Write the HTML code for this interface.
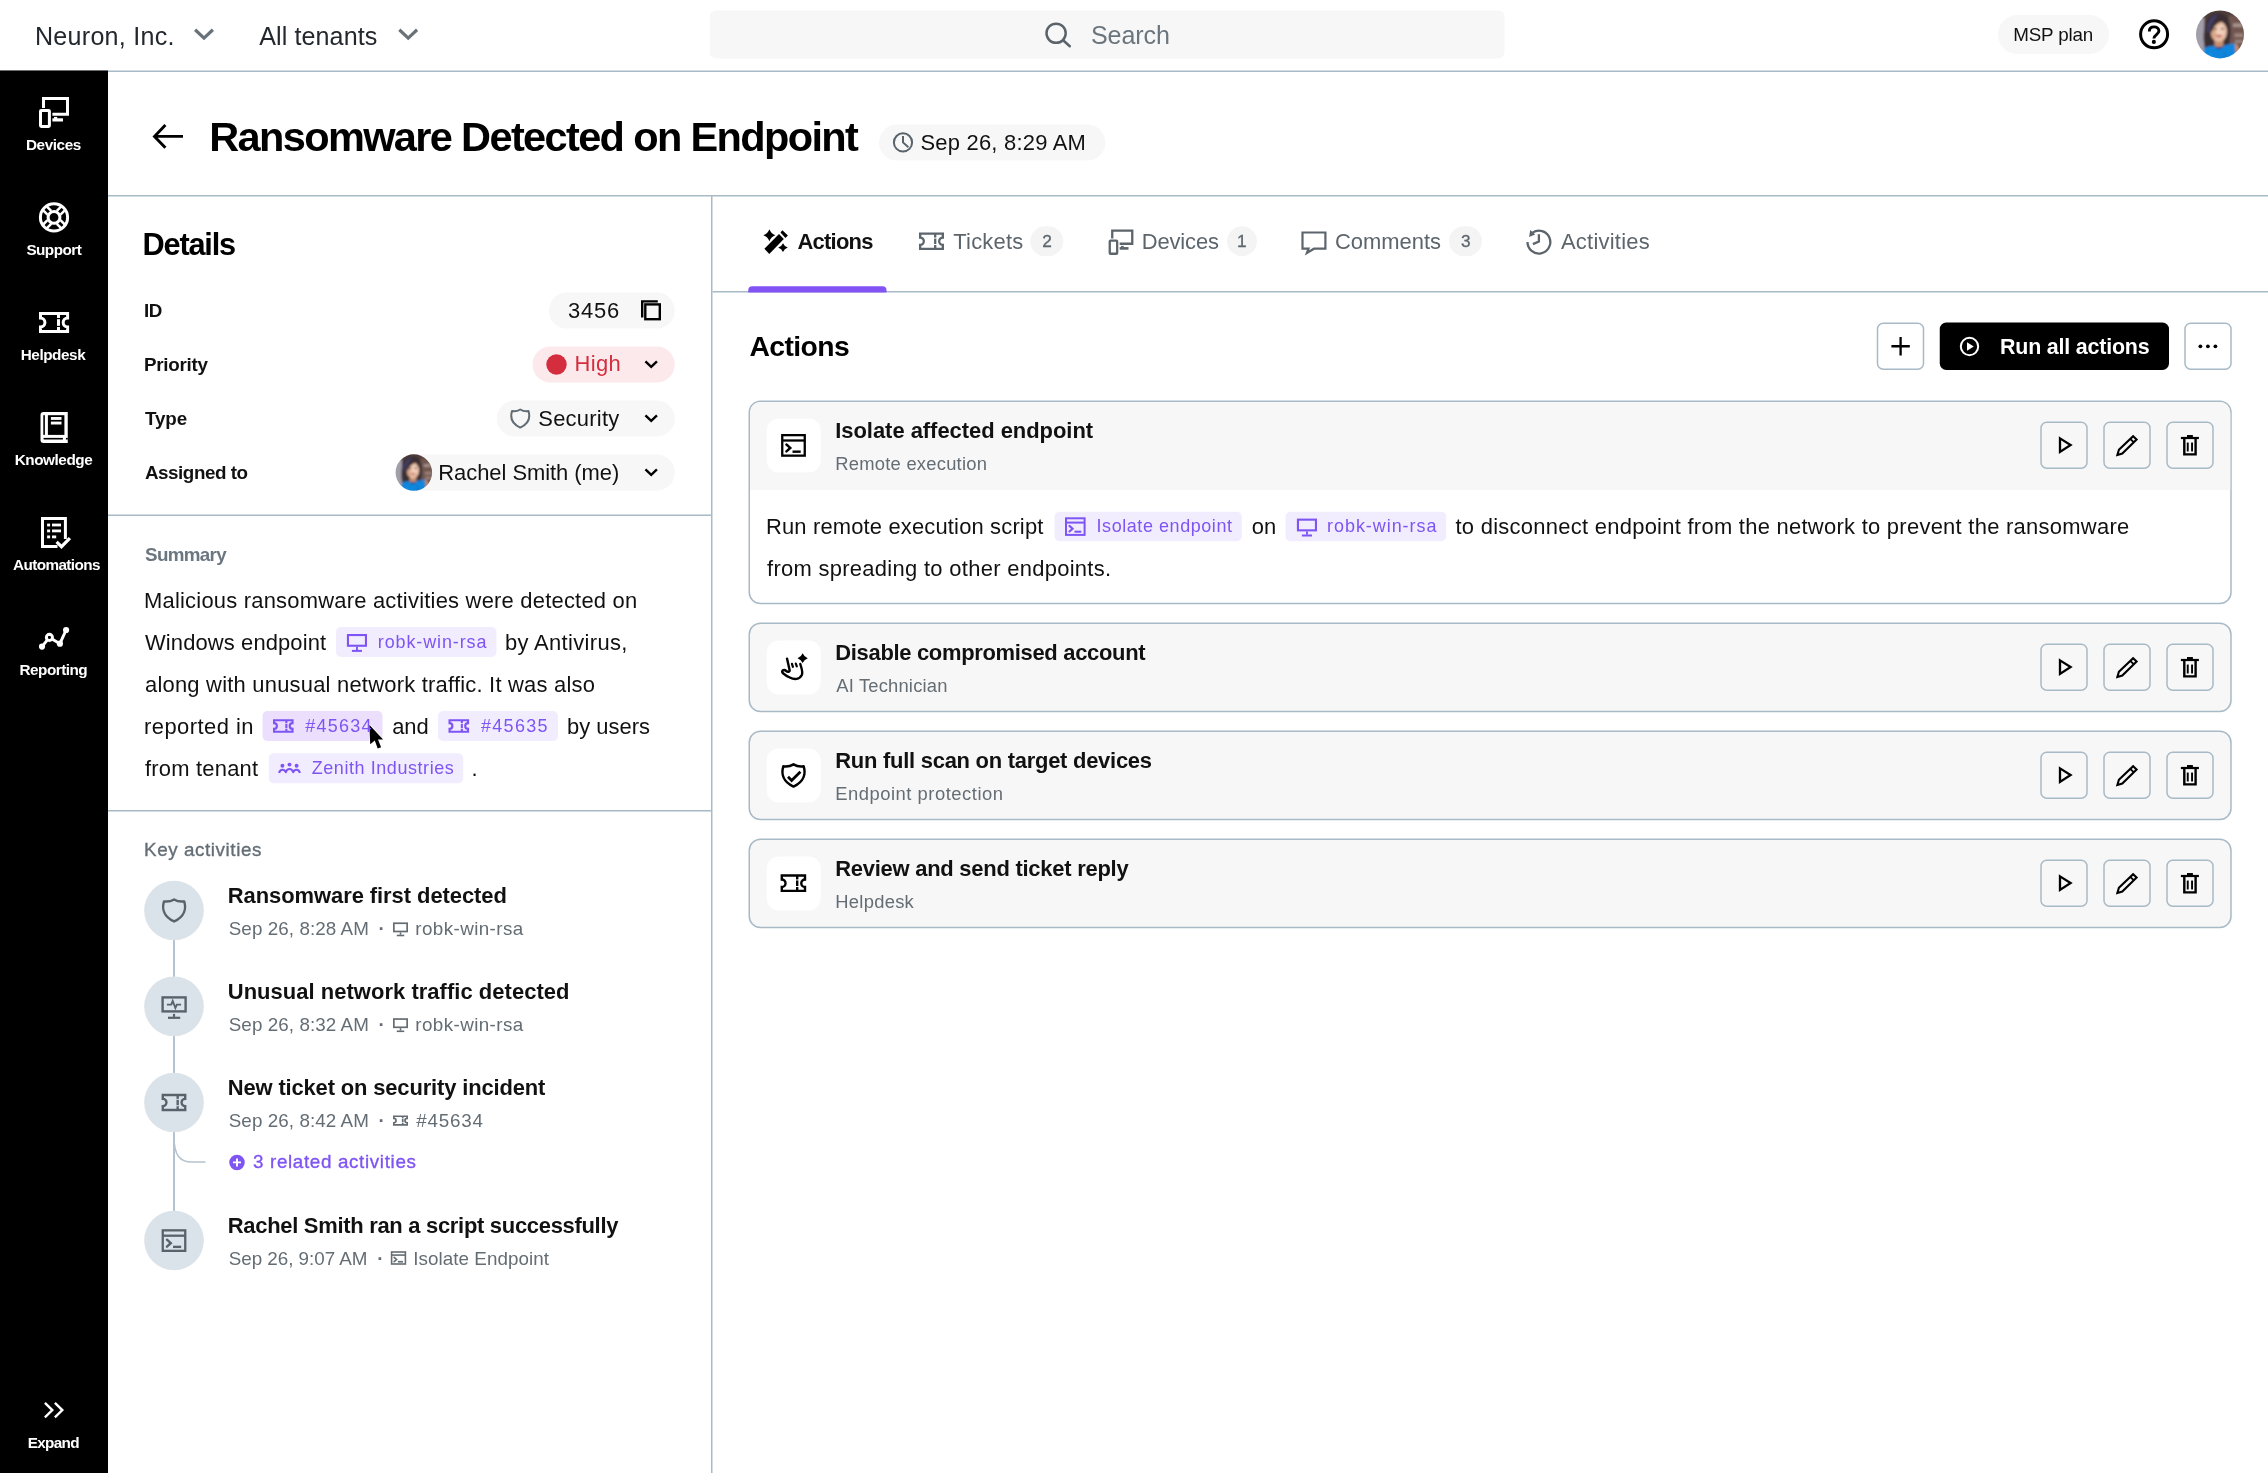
<!DOCTYPE html>
<html lang="en">
<head>
<meta charset="utf-8">
<title>Ransomware Detected on Endpoint</title>
<style>
html,body{margin:0;padding:0;background:#fff;}
body{width:2268px;height:1473px;position:relative;overflow:hidden;font-family:"Liberation Sans",sans-serif;color:#111;}
#gfx{position:absolute;left:0;top:0;width:2268px;height:1473px;display:block;}
.t{position:absolute;white-space:pre;line-height:1;font-weight:400;}
header,nav,section,aside,main{position:absolute;left:0;top:0;width:0;height:0;will-change:transform;}
</style>
</head>
<body>
<svg id="gfx" width="2268" height="1473" viewBox="0 0 2268 1473">
<g class="topbar-gfx">
<rect x="0" y="70.5" width="2268" height="1.5" fill="#a9bac7"/>
<path d="M195.13,29.73 L204,38.14 L212.87,29.73" fill="none" stroke="#6a7279" stroke-width="3.2" stroke-linecap="butt" stroke-linejoin="miter"/>
<path d="M399.33,29.73 L408.2,38.14 L417.07,29.73" fill="none" stroke="#6a7279" stroke-width="3.2" stroke-linecap="butt" stroke-linejoin="miter"/>
<rect x="709.75" y="10.5" width="794.75" height="48" rx="6" fill="#f7f7f7"/>
<circle cx="1056.1" cy="33.25" r="9.6" fill="none" stroke="#5a636b" stroke-width="2.5"/>
<line x1="1063.1" y1="40.3" x2="1069.8" y2="46.2" stroke="#5a636b" stroke-width="2.5" stroke-linecap="round"/>
<rect x="1998" y="15" width="111" height="39" rx="19.5" fill="#f7f7f7"/>
<circle cx="2154.1" cy="34.35" r="13.5" fill="none" stroke="#000" stroke-width="3"/>
<path d="M2149.3,31.4 C2149.3,28.4 2151.4,26.9 2154.1,26.9 C2156.9,26.9 2158.9,28.6 2158.9,31 C2158.9,34.6 2153.9,34.6 2153.9,38.6" fill="none" stroke="#000" stroke-width="2.9" stroke-linecap="butt" stroke-linejoin="round"/>
<circle cx="2153.85" cy="41.9" r="2.05" fill="#000"/>
<g transform="translate(2196,10.4) scale(1)" clip-path="url(#av1)"><clipPath id="av1"><circle cx="24" cy="24" r="24"/></clipPath><filter id="av1b" x="-10%" y="-10%" width="120%" height="120%"><feGaussianBlur stdDeviation="0.8"/></filter><g filter="url(#av1b)"><rect x="-4" y="-4" width="56" height="56" fill="#4f3d3a"/><rect x="-4" y="7" width="12.3" height="48" fill="#a29eaa"/><rect x="33" y="5" width="20" height="32" fill="#70564f"/><rect x="37" y="13" width="9" height="3.6" fill="#a8948e"/><rect x="38.5" y="23" width="9" height="3.6" fill="#9d857f"/><rect x="39" y="29.5" width="8" height="3" fill="#9d857f"/><path d="M8.2,34 C6.3,18 10,3 21,2.4 C30,2.2 35.2,10 34.3,22 C34,28 33.6,32 32.3,35.5 L10,36.5 Z" fill="#3b2e31"/><path d="M10.6,21 C10.2,10 16,4 22.6,4 C18.6,8.5 15,14 13.2,22.5 Z" fill="#3f3c64"/><rect x="18.4" y="28" width="9" height="9.5" fill="#c4906e"/><ellipse cx="22.9" cy="21.3" rx="8.1" ry="10.4" fill="#e5bba1"/><ellipse cx="24.6" cy="20.5" rx="4.2" ry="6.5" fill="#f4d6c2" opacity="0.75"/><ellipse cx="17.2" cy="23" rx="2.2" ry="6" fill="#c99778" opacity="0.6"/><path d="M14.3,20.5 C14.4,12 20,8.4 30.2,10.4 C24,11.3 18.6,13.3 15.9,21.5 Z" fill="#3b2e31"/><path d="M30.3,12.5 C32.6,18 32.2,27 30,33 L33,34.5 C35,27 35,17 32.2,10.5 Z" fill="#3b2e31"/><ellipse cx="19.2" cy="18.3" rx="1.7" ry="0.8" fill="#4a352f"/><ellipse cx="26.5" cy="18.3" rx="1.7" ry="0.8" fill="#4a352f"/><ellipse cx="23" cy="25.6" rx="3.3" ry="1.15" fill="#c96a6a"/><path d="M5,52 L8.4,37.6 C12,35.6 15,35.6 17.5,35 C21,39.6 25.5,39.6 28.5,34.6 C32,34.6 36,33.6 38.7,32.7 L40.5,52 Z" fill="#0d86dc"/><path d="M12,52 L14,40 L17,52 Z" fill="#2a9bea" opacity="0.7"/><path d="M26,52 L29,40 L31,52 Z" fill="#0a6fc0" opacity="0.6"/><path d="M17.5,35 C21,39.6 25.5,39.6 28.5,34.6 C25.5,37.2 21,37.4 17.5,35 Z" fill="#1b2b7c"/><path d="M38.7,32.7 C42,33.5 44.6,38 44.6,52 L40.5,52 Z" fill="#c4906e"/></g></g>
</g>
<g class="sidebar-gfx">
<rect x="0" y="70.5" width="108" height="1402.5" fill="#000"/>
<path d="M43.5,108 V98.4 H67.5 V114.3 H52.4" fill="none" stroke="#fff" stroke-width="3" stroke-linecap="butt" stroke-linejoin="miter"/><rect x="52.4" y="118.3" width="10.6" height="3.2" fill="#fff"/><rect x="54" y="116.9" width="3.2" height="2" fill="#fff"/><rect x="40.5" y="110.5" width="8.9" height="15.9" rx="0.8" fill="none" stroke="#fff" stroke-width="3"/>
<circle cx="54" cy="217.4" r="13.6" fill="none" stroke="#fff" stroke-width="3"/>
<circle cx="54" cy="217.4" r="5.9" fill="none" stroke="#fff" stroke-width="3"/>
<line x1="60.51" y1="220.23" x2="65.03" y2="224.75" stroke="#fff" stroke-width="2.5" stroke-linecap="butt"/>
<line x1="56.83" y1="223.91" x2="61.35" y2="228.43" stroke="#fff" stroke-width="2.5" stroke-linecap="butt"/>
<line x1="51.17" y1="223.91" x2="46.65" y2="228.43" stroke="#fff" stroke-width="2.5" stroke-linecap="butt"/>
<line x1="47.49" y1="220.23" x2="42.97" y2="224.75" stroke="#fff" stroke-width="2.5" stroke-linecap="butt"/>
<line x1="47.49" y1="214.57" x2="42.97" y2="210.05" stroke="#fff" stroke-width="2.5" stroke-linecap="butt"/>
<line x1="51.17" y1="210.89" x2="46.65" y2="206.37" stroke="#fff" stroke-width="2.5" stroke-linecap="butt"/>
<line x1="56.83" y1="210.89" x2="61.35" y2="206.37" stroke="#fff" stroke-width="2.5" stroke-linecap="butt"/>
<line x1="60.51" y1="214.57" x2="65.03" y2="210.05" stroke="#fff" stroke-width="2.5" stroke-linecap="butt"/>
<path d="M40.5,313.4 H67.6 V318.02 A4.43,4.43 0 0 0 67.6,326.88 V331.5 H40.5 V326.88 A4.43,4.43 0 0 0 40.5,318.02 Z" fill="none" stroke="#fff" stroke-width="3" stroke-linecap="butt" stroke-linejoin="miter"/><line x1="58.5" y1="313.59" x2="58.5" y2="318.02" stroke="#fff" stroke-width="3" stroke-linecap="butt"/><line x1="58.5" y1="319.18" x2="58.5" y2="325.83" stroke="#fff" stroke-width="3" stroke-linecap="butt"/><line x1="58.5" y1="326.99" x2="58.5" y2="331.31" stroke="#fff" stroke-width="3" stroke-linecap="butt"/>
<path d="M43.5,411.9 H67.75 V442.9 H43.5 A3,3 0 0 1 40.5,439.9 V414.9 A3,3 0 0 1 43.5,411.9 Z" fill="#fff"/>
<rect x="47.9" y="415.2" width="16.5" height="19.7" fill="#000"/>
<rect x="43.3" y="415.2" width="1.6" height="19.7" fill="#000"/>
<rect x="43.6" y="437.9" width="19.3" height="1.6" fill="#000"/>
<rect x="65.9" y="437.9" width="1.9" height="1.6" fill="#000"/>
<rect x="50.9" y="417" width="10.6" height="2.9" fill="#fff"/>
<rect x="50.9" y="421.6" width="10.6" height="2.9" fill="#fff"/>
<path d="M65.4,539 V518.5 H42.5 V546.4 H57.5" fill="none" stroke="#fff" stroke-width="3" stroke-linecap="butt" stroke-linejoin="miter"/>
<rect x="47.1" y="523.6" width="3" height="2.8" fill="#fff"/>
<rect x="52" y="523.6" width="9" height="2.8" fill="#fff"/>
<rect x="47.1" y="529.5" width="3" height="2.8" fill="#fff"/>
<rect x="52" y="529.5" width="9" height="2.8" fill="#fff"/>
<rect x="47.1" y="535.5" width="3" height="2.8" fill="#fff"/>
<rect x="52" y="535.5" width="4.2" height="2.8" fill="#fff"/>
<path d="M56.6,541.8 L61.5,546.7 L69.9,538.2" fill="none" stroke="#fff" stroke-width="3.2" stroke-linecap="butt" stroke-linejoin="miter"/>
<path d="M42,646.6 L49.4,637.4 L59.9,643.7 L66.1,630" fill="none" stroke="#fff" stroke-width="3" stroke-linecap="butt" stroke-linejoin="miter"/>
<circle cx="42" cy="646.6" r="3.1" fill="#fff"/>
<circle cx="59.9" cy="643.7" r="3.1" fill="#fff"/>
<circle cx="66.1" cy="630" r="3.1" fill="#fff"/>
<circle cx="49.4" cy="637.4" r="3" fill="#000" stroke="#fff" stroke-width="3.1"/>
<circle cx="49.4" cy="637.4" r="1.3" fill="#000"/>
<path d="M44.9,1402.9 L52.3,1410.1 L44.9,1417.3" fill="none" stroke="#fff" stroke-width="2.4" stroke-linecap="butt" stroke-linejoin="miter"/>
<path d="M54.9,1402.9 L62.3,1410.1 L54.9,1417.3" fill="none" stroke="#fff" stroke-width="2.4" stroke-linecap="butt" stroke-linejoin="miter"/>
</g>
<g class="titlebar-gfx">
<rect x="108" y="195" width="2160" height="1.5" fill="#a9bac7"/>
<path d="M183,136.4 H155.2 M165.4,125.1 L154.5,136.4 L165.4,147.7" fill="none" stroke="#000" stroke-width="2.9" stroke-linecap="butt" stroke-linejoin="miter"/>
<rect x="879" y="124.5" width="226.25" height="36" rx="18" fill="#f7f7f7"/>
<circle cx="903" cy="142.4" r="9.1" fill="none" stroke="#5a636b" stroke-width="2"/>
<path d="M903,136 V142.4 L908.4,147.2" fill="none" stroke="#5a636b" stroke-width="2" stroke-linecap="butt" stroke-linejoin="miter"/>
</g>
<g class="details-gfx">
<rect x="711" y="196" width="1.5" height="1277" fill="#a9bac7"/>
<rect x="108" y="514.5" width="603" height="1.5" fill="#a9bac7"/>
<rect x="108" y="810" width="603" height="1.5" fill="#a9bac7"/>
<rect x="549" y="292.5" width="125.75" height="36" rx="18" fill="#f7f7f7"/>
<rect x="645.3" y="304.4" width="14.5" height="14.8" fill="none" stroke="#000" stroke-width="2.4"/>
<path d="M642.2,317.5 V301.4 H657.8" fill="none" stroke="#000" stroke-width="2.4" stroke-linecap="butt" stroke-linejoin="miter"/>
<rect x="532.5" y="346.5" width="142.25" height="36" rx="18" fill="#fbe9ec"/>
<circle cx="556.5" cy="364.5" r="10.2" fill="#d42e3e"/>
<path d="M645.45,361.45 L651.2,366.9 L656.95,361.45" fill="none" stroke="#000" stroke-width="2.4" stroke-linecap="butt" stroke-linejoin="miter"/>
<rect x="496.75" y="400.5" width="178" height="36" rx="18" fill="#f7f7f7"/>
<path d="M520.25,409.5 C517.84,411 514.62,411.5 512.01,411.1 C510.2,416.9 511.61,423.5 520.25,427.54 C528.89,423.5 530.3,416.9 528.49,411.1 C525.88,411.5 522.66,411 520.25,409.5 Z" fill="none" stroke="#626c74" stroke-width="2" stroke-linecap="butt" stroke-linejoin="round"/>
<path d="M645.45,415.45 L651.2,420.9 L656.95,415.45" fill="none" stroke="#000" stroke-width="2.4" stroke-linecap="butt" stroke-linejoin="miter"/>
<rect x="396" y="454.5" width="278.75" height="36" rx="18" fill="#f7f7f7"/>
<g transform="translate(395.6,454.3) scale(0.76)" clip-path="url(#av2)"><clipPath id="av2"><circle cx="24" cy="24" r="24"/></clipPath><filter id="av2b" x="-10%" y="-10%" width="120%" height="120%"><feGaussianBlur stdDeviation="1.05"/></filter><g filter="url(#av2b)"><rect x="-4" y="-4" width="56" height="56" fill="#4f3d3a"/><rect x="-4" y="7" width="12.3" height="48" fill="#a29eaa"/><rect x="33" y="5" width="20" height="32" fill="#70564f"/><rect x="37" y="13" width="9" height="3.6" fill="#a8948e"/><rect x="38.5" y="23" width="9" height="3.6" fill="#9d857f"/><rect x="39" y="29.5" width="8" height="3" fill="#9d857f"/><path d="M8.2,34 C6.3,18 10,3 21,2.4 C30,2.2 35.2,10 34.3,22 C34,28 33.6,32 32.3,35.5 L10,36.5 Z" fill="#3b2e31"/><path d="M10.6,21 C10.2,10 16,4 22.6,4 C18.6,8.5 15,14 13.2,22.5 Z" fill="#3f3c64"/><rect x="18.4" y="28" width="9" height="9.5" fill="#c4906e"/><ellipse cx="22.9" cy="21.3" rx="8.1" ry="10.4" fill="#e5bba1"/><ellipse cx="24.6" cy="20.5" rx="4.2" ry="6.5" fill="#f4d6c2" opacity="0.75"/><ellipse cx="17.2" cy="23" rx="2.2" ry="6" fill="#c99778" opacity="0.6"/><path d="M14.3,20.5 C14.4,12 20,8.4 30.2,10.4 C24,11.3 18.6,13.3 15.9,21.5 Z" fill="#3b2e31"/><path d="M30.3,12.5 C32.6,18 32.2,27 30,33 L33,34.5 C35,27 35,17 32.2,10.5 Z" fill="#3b2e31"/><ellipse cx="19.2" cy="18.3" rx="1.7" ry="0.8" fill="#4a352f"/><ellipse cx="26.5" cy="18.3" rx="1.7" ry="0.8" fill="#4a352f"/><ellipse cx="23" cy="25.6" rx="3.3" ry="1.15" fill="#c96a6a"/><path d="M5,52 L8.4,37.6 C12,35.6 15,35.6 17.5,35 C21,39.6 25.5,39.6 28.5,34.6 C32,34.6 36,33.6 38.7,32.7 L40.5,52 Z" fill="#0d86dc"/><path d="M12,52 L14,40 L17,52 Z" fill="#2a9bea" opacity="0.7"/><path d="M26,52 L29,40 L31,52 Z" fill="#0a6fc0" opacity="0.6"/><path d="M17.5,35 C21,39.6 25.5,39.6 28.5,34.6 C25.5,37.2 21,37.4 17.5,35 Z" fill="#1b2b7c"/><path d="M38.7,32.7 C42,33.5 44.6,38 44.6,52 L40.5,52 Z" fill="#c4906e"/></g></g>
<path d="M645.45,469.45 L651.2,474.9 L656.95,469.45" fill="none" stroke="#000" stroke-width="2.4" stroke-linecap="butt" stroke-linejoin="miter"/>
<rect x="336" y="627" width="160.5" height="30" rx="5" fill="#f1edfe"/>
<rect x="347.95" y="635.05" width="18" height="10.7" fill="none" stroke="#7e54f3" stroke-width="2.1"/><rect x="356" y="646.8" width="1.89" height="3.21" fill="#7e54f3"/><rect x="351.92" y="649.9" width="10.05" height="1.99" fill="#7e54f3"/>
<rect x="262.5" y="711" width="120" height="30" rx="5" fill="#ebdffd"/>
<path d="M274.05,720.25 H292.55 V723.14 A2.86,2.86 0 0 0 292.55,728.86 V731.75 H274.05 V728.86 A2.86,2.86 0 0 0 274.05,723.14 Z" fill="none" stroke="#7e54f3" stroke-width="2.1" stroke-linecap="butt" stroke-linejoin="miter"/><line x1="286.35" y1="720.29" x2="286.35" y2="723.14" stroke="#7e54f3" stroke-width="2.1" stroke-linecap="butt"/><line x1="286.35" y1="723.89" x2="286.35" y2="728.18" stroke="#7e54f3" stroke-width="2.1" stroke-linecap="butt"/><line x1="286.35" y1="728.92" x2="286.35" y2="731.71" stroke="#7e54f3" stroke-width="2.1" stroke-linecap="butt"/>
<rect x="438" y="711" width="120" height="30" rx="5" fill="#f1edfe"/>
<path d="M449.55,720.25 H468.05 V723.14 A2.86,2.86 0 0 0 468.05,728.86 V731.75 H449.55 V728.86 A2.86,2.86 0 0 0 449.55,723.14 Z" fill="none" stroke="#7e54f3" stroke-width="2.1" stroke-linecap="butt" stroke-linejoin="miter"/><line x1="461.85" y1="720.29" x2="461.85" y2="723.14" stroke="#7e54f3" stroke-width="2.1" stroke-linecap="butt"/><line x1="461.85" y1="723.89" x2="461.85" y2="728.18" stroke="#7e54f3" stroke-width="2.1" stroke-linecap="butt"/><line x1="461.85" y1="728.92" x2="461.85" y2="731.71" stroke="#7e54f3" stroke-width="2.1" stroke-linecap="butt"/>
<rect x="268.75" y="753.25" width="194.5" height="30" rx="5" fill="#f1edfe"/>
<circle cx="282.4" cy="765.7" r="1.95" fill="#7e54f3"/>
<circle cx="289.5" cy="764.6" r="1.95" fill="#7e54f3"/>
<circle cx="296.6" cy="765.7" r="1.95" fill="#7e54f3"/>
<path d="M279,772.9 C280.3,768.8 284.4,768.8 285.8,772.2 C287.2,768 291.8,768 293.2,772.2 C294.6,768.8 298.7,768.8 300,772.9" fill="none" stroke="#7e54f3" stroke-width="2.1" stroke-linecap="butt" stroke-linejoin="round"/>
<rect x="173" y="940" width="2" height="37" fill="#b4c3cf"/>
<rect x="173" y="1036" width="2" height="37" fill="#b4c3cf"/>
<rect x="173" y="1132" width="2" height="79" fill="#b4c3cf"/>
<path d="M174,1136 C174,1156 180,1162 192,1162 H205.5" fill="none" stroke="#b4c3cf" stroke-width="1.5" stroke-linecap="butt" stroke-linejoin="miter"/>
<circle cx="174" cy="910.5" r="29.85" fill="#dbe3ea"/>
<circle cx="174" cy="1006.4" r="29.85" fill="#dbe3ea"/>
<circle cx="174" cy="1102.5" r="29.85" fill="#dbe3ea"/>
<circle cx="174" cy="1240.5" r="29.85" fill="#dbe3ea"/>
<path d="M174.1,899.42 C171.15,901.25 167.21,901.86 164.01,901.37 C161.8,908.45 163.52,916.5 174.1,921.43 C184.68,916.5 186.4,908.45 184.19,901.37 C180.99,901.86 177.05,901.25 174.1,899.42 Z" fill="none" stroke="#59626b" stroke-width="2.4" stroke-linecap="butt" stroke-linejoin="round"/>
<rect x="162.6" y="997.4" width="23" height="14" fill="none" stroke="#59626b" stroke-width="2.4"/>
<rect x="172.9" y="1013.9" width="2.2" height="3" fill="#59626b"/>
<rect x="168" y="1016.7" width="12.2" height="2.2" fill="#59626b"/>
<path d="M166.9,1004.6 H171.3 L172.7,1001 L175.4,1008 L176.8,1004.6 H181.1" fill="none" stroke="#59626b" stroke-width="1.9" stroke-linecap="butt" stroke-linejoin="miter"/>
<path d="M162.8,1095 H185.2 V1098.85 A3.65,3.65 0 0 0 185.2,1106.15 V1110 H162.8 V1106.15 A3.65,3.65 0 0 0 162.8,1098.85 Z" fill="none" stroke="#59626b" stroke-width="2.4" stroke-linecap="butt" stroke-linejoin="miter"/><line x1="177.67" y1="1095.19" x2="177.67" y2="1098.85" stroke="#59626b" stroke-width="2.4" stroke-linecap="butt"/><line x1="177.67" y1="1099.8" x2="177.67" y2="1105.28" stroke="#59626b" stroke-width="2.4" stroke-linecap="butt"/><line x1="177.67" y1="1106.24" x2="177.67" y2="1109.81" stroke="#59626b" stroke-width="2.4" stroke-linecap="butt"/>
<rect x="162.75" y="1230.35" width="22.5" height="20.5" fill="none" stroke="#59626b" stroke-width="2.3"/><line x1="162.75" y1="1235.7" x2="185.25" y2="1235.7" stroke="#59626b" stroke-width="2.3" stroke-linecap="butt"/><path d="M166.93,1239.69 L170.78,1243.15 L166.93,1246.64" fill="none" stroke="#59626b" stroke-width="2.42" stroke-linecap="round" stroke-linejoin="miter"/><line x1="173.01" y1="1246.87" x2="181.19" y2="1246.87" stroke="#59626b" stroke-width="2.42" stroke-linecap="butt"/>
<rect x="393.85" y="923.25" width="13.3" height="8.24" fill="none" stroke="#646d74" stroke-width="1.7"/><rect x="399.74" y="932.34" width="1.53" height="2.43" fill="#646d74"/><rect x="396.75" y="934.68" width="7.5" height="1.61" fill="#646d74"/>
<rect x="393.85" y="1019.05" width="13.3" height="8.24" fill="none" stroke="#646d74" stroke-width="1.7"/><rect x="399.74" y="1028.14" width="1.53" height="2.43" fill="#646d74"/><rect x="396.75" y="1030.49" width="7.5" height="1.61" fill="#646d74"/>
<path d="M393.85,1116.25 H407.15 V1118.42 A2.18,2.18 0 0 0 407.15,1122.78 V1124.95 H393.85 V1122.78 A2.18,2.18 0 0 0 393.85,1118.42 Z" fill="none" stroke="#646d74" stroke-width="1.7" stroke-linecap="butt" stroke-linejoin="miter"/><line x1="402.72" y1="1116.23" x2="402.72" y2="1118.42" stroke="#646d74" stroke-width="1.7" stroke-linecap="butt"/><line x1="402.72" y1="1118.99" x2="402.72" y2="1122.26" stroke="#646d74" stroke-width="1.7" stroke-linecap="butt"/><line x1="402.72" y1="1122.84" x2="402.72" y2="1124.97" stroke="#646d74" stroke-width="1.7" stroke-linecap="butt"/>
<rect x="391.6" y="1252" width="13.8" height="12" fill="none" stroke="#646d74" stroke-width="1.6"/><line x1="391.6" y1="1255.08" x2="405.4" y2="1255.08" stroke="#646d74" stroke-width="1.6" stroke-linecap="butt"/><path d="M394.11,1257.46 L396.5,1259.52 L394.11,1261.6" fill="none" stroke="#646d74" stroke-width="1.68" stroke-linecap="round" stroke-linejoin="miter"/><line x1="397.88" y1="1261.74" x2="402.97" y2="1261.74" stroke="#646d74" stroke-width="1.68" stroke-linecap="butt"/>
<circle cx="237" cy="1162.4" r="7.75" fill="#7e54f3"/>
<path d="M233,1162.4 H241 M237,1158.4 V1166.4" fill="none" stroke="#fff" stroke-width="1.9" stroke-linecap="butt" stroke-linejoin="miter"/>
</g>
<g class="actions-gfx">
<rect x="712.5" y="291" width="1555.5" height="1.5" fill="#a9bac7"/>
<path d="M748.25,292.5 V290.25 A4,4 0 0 1 752.25,286.25 H882.5 A4,4 0 0 1 886.5,290.25 V292.5 Z" fill="#8253f5"/>
<path d="M779,234.1 L783.8,239 L769.3,253.9 L764.4,248.75 Z" fill="#000"/>
<path d="M782.4,230.3 L787.9,235.4 L785.4,237.9 L780.5,232.5 Z" fill="#000"/>
<path d="M769.4,229.3 Q771.02,233.68 775.4,235.3 Q771.02,236.92 769.4,241.3 Q767.78,236.92 763.4,235.3 Q767.78,233.68 769.4,229.3 Z" fill="#000"/>
<path d="M783,243.2 Q784.3,246.41 787.8,247.6 Q784.3,248.79 783,252 Q781.7,248.79 778.2,247.6 Q781.7,246.41 783,243.2 Z" fill="#000"/>
<path d="M920.15,233.65 H942.85 V237.57 A3.67,3.67 0 0 0 942.85,244.93 V248.85 H920.15 V244.93 A3.67,3.67 0 0 0 920.15,237.57 Z" fill="none" stroke="#5c656c" stroke-width="2.3" stroke-linecap="butt" stroke-linejoin="miter"/><line x1="935.2" y1="233.9" x2="935.2" y2="237.57" stroke="#5c656c" stroke-width="2.3" stroke-linecap="butt"/><line x1="935.2" y1="238.54" x2="935.2" y2="244.05" stroke="#5c656c" stroke-width="2.3" stroke-linecap="butt"/><line x1="935.2" y1="245.01" x2="935.2" y2="248.6" stroke="#5c656c" stroke-width="2.3" stroke-linecap="butt"/>
<path d="M1112.25,238.57 V230.64 H1132.25 V243.77 H1119.67" fill="none" stroke="#5c656c" stroke-width="2.3" stroke-linecap="butt" stroke-linejoin="miter"/><rect x="1119.67" y="247.07" width="8.83" height="2.64" fill="#5c656c"/><rect x="1121" y="245.92" width="2.67" height="1.65" fill="#5c656c"/><rect x="1109.75" y="240.63" width="7.42" height="13.13" rx="0.8" fill="none" stroke="#5c656c" stroke-width="2.3"/>
<path d="M1302.5,232.5 H1325.4 V248.7 H1314 L1306.9,253 L1308.5,248.7 H1302.5 Z" fill="none" stroke="#5c656c" stroke-width="2.2" stroke-linecap="butt" stroke-linejoin="miter"/>
<path d="M1532.6,232.6 A11.4,11.4 0 1 1 1527.5,242" fill="none" stroke="#5c656c" stroke-width="2.3" stroke-linecap="butt" stroke-linejoin="miter"/>
<path d="M1530.2,229.9 L1529.1,237 L1535.2,234.4 Z" fill="#5c656c"/>
<path d="M1538.9,234.2 V241.6 L1532.9,244.1" fill="none" stroke="#5c656c" stroke-width="2.3" stroke-linecap="butt" stroke-linejoin="miter"/>
<rect x="1030.25" y="226.25" width="33" height="30" rx="15" fill="#f4f4f4"/>
<rect x="1227" y="226.25" width="30" height="30" rx="15" fill="#f4f4f4"/>
<rect x="1449" y="226.25" width="33" height="30" rx="15" fill="#f4f4f4"/>
<rect x="1877.5" y="323.25" width="46" height="46" rx="5.75" fill="#fff" stroke="#a9bac7" stroke-width="1.5"/>
<path d="M1891.4,346.25 H1909.8 M1900.6,337.1 V355.4" fill="none" stroke="#000" stroke-width="2.3" stroke-linecap="butt" stroke-linejoin="miter"/>
<rect x="1939.75" y="322.5" width="229.25" height="47.5" rx="6.5" fill="#000"/>
<circle cx="1969.5" cy="346.5" r="8.7" fill="none" stroke="#fff" stroke-width="2"/>
<path d="M1967,342.2 L1973.8,346.5 L1967,350.8 Z" fill="#fff"/>
<rect x="2185" y="323.25" width="46" height="46" rx="5.75" fill="#fff" stroke="#a9bac7" stroke-width="1.5"/>
<circle cx="2200.4" cy="346.3" r="1.9" fill="#000"/>
<circle cx="2207.9" cy="346.3" r="1.9" fill="#000"/>
<circle cx="2215.4" cy="346.3" r="1.9" fill="#000"/>
<rect x="749.25" y="401.25" width="1481.75" height="202.25" rx="11.25" fill="#fff" stroke="#a9bac7" stroke-width="1.5"/>
<path d="M750.0,490 V412.5 A10.5,10.5 0 0 1 760.5,402.0 H2219.75 A10.5,10.5 0 0 1 2230.25,412.5 V490 Z" fill="#f7f7f7"/>
<rect x="766.75" y="418.5" width="54" height="54" rx="12" fill="#fff"/>
<rect x="2041" y="422.25" width="46" height="46" rx="5.75" fill="none" stroke="#a9bac7" stroke-width="1.5"/>
<rect x="2104" y="422.25" width="46" height="46" rx="5.75" fill="none" stroke="#a9bac7" stroke-width="1.5"/>
<rect x="2167" y="422.25" width="46" height="46" rx="5.75" fill="none" stroke="#a9bac7" stroke-width="1.5"/>
<path d="M2060,438.35 L2070.6,445.05 L2060,451.95 Z" fill="none" stroke="#000" stroke-width="2.3" stroke-linecap="butt" stroke-linejoin="miter"/>
<path d="M2118.9,449.75 L2133.1,436.15 L2136.6,439.55 L2122.3,453.45 L2117.4,454.95 Z" fill="none" stroke="#000" stroke-width="2.1" stroke-linecap="butt" stroke-linejoin="miter"/>
<path d="M2130.2,438.85 L2133.9,442.35" fill="none" stroke="#000" stroke-width="1.9" stroke-linecap="butt" stroke-linejoin="miter"/>
<rect x="2180.9" y="436.9" width="18" height="2.2" fill="#000"/>
<rect x="2187" y="435.05" width="5.9" height="2.4" fill="#000"/>
<path d="M2184.3,439.05 V454.35 H2195.6 V439.05" fill="none" stroke="#000" stroke-width="2.4" stroke-linecap="butt" stroke-linejoin="miter"/>
<rect x="2186.8" y="442.55" width="1.9" height="8.9" fill="#000"/>
<rect x="2191.1" y="442.55" width="1.9" height="8.9" fill="#000"/>
<rect x="749.25" y="623.25" width="1481.75" height="88.25" rx="11.25" fill="#f7f7f7" stroke="#a9bac7" stroke-width="1.5"/>
<rect x="766.75" y="640.5" width="54" height="54" rx="12" fill="#fff"/>
<rect x="2041" y="644.25" width="46" height="46" rx="5.75" fill="none" stroke="#a9bac7" stroke-width="1.5"/>
<rect x="2104" y="644.25" width="46" height="46" rx="5.75" fill="none" stroke="#a9bac7" stroke-width="1.5"/>
<rect x="2167" y="644.25" width="46" height="46" rx="5.75" fill="none" stroke="#a9bac7" stroke-width="1.5"/>
<path d="M2060,660.35 L2070.6,667.05 L2060,673.95 Z" fill="none" stroke="#000" stroke-width="2.3" stroke-linecap="butt" stroke-linejoin="miter"/>
<path d="M2118.9,671.75 L2133.1,658.15 L2136.6,661.55 L2122.3,675.45 L2117.4,676.95 Z" fill="none" stroke="#000" stroke-width="2.1" stroke-linecap="butt" stroke-linejoin="miter"/>
<path d="M2130.2,660.85 L2133.9,664.35" fill="none" stroke="#000" stroke-width="1.9" stroke-linecap="butt" stroke-linejoin="miter"/>
<rect x="2180.9" y="658.9" width="18" height="2.2" fill="#000"/>
<rect x="2187" y="657.05" width="5.9" height="2.4" fill="#000"/>
<path d="M2184.3,661.05 V676.35 H2195.6 V661.05" fill="none" stroke="#000" stroke-width="2.4" stroke-linecap="butt" stroke-linejoin="miter"/>
<rect x="2186.8" y="664.55" width="1.9" height="8.9" fill="#000"/>
<rect x="2191.1" y="664.55" width="1.9" height="8.9" fill="#000"/>
<rect x="749.25" y="731.25" width="1481.75" height="88.25" rx="11.25" fill="#f7f7f7" stroke="#a9bac7" stroke-width="1.5"/>
<rect x="766.75" y="748.5" width="54" height="54" rx="12" fill="#fff"/>
<rect x="2041" y="752.25" width="46" height="46" rx="5.75" fill="none" stroke="#a9bac7" stroke-width="1.5"/>
<rect x="2104" y="752.25" width="46" height="46" rx="5.75" fill="none" stroke="#a9bac7" stroke-width="1.5"/>
<rect x="2167" y="752.25" width="46" height="46" rx="5.75" fill="none" stroke="#a9bac7" stroke-width="1.5"/>
<path d="M2060,768.35 L2070.6,775.05 L2060,781.95 Z" fill="none" stroke="#000" stroke-width="2.3" stroke-linecap="butt" stroke-linejoin="miter"/>
<path d="M2118.9,779.75 L2133.1,766.15 L2136.6,769.55 L2122.3,783.45 L2117.4,784.95 Z" fill="none" stroke="#000" stroke-width="2.1" stroke-linecap="butt" stroke-linejoin="miter"/>
<path d="M2130.2,768.85 L2133.9,772.35" fill="none" stroke="#000" stroke-width="1.9" stroke-linecap="butt" stroke-linejoin="miter"/>
<rect x="2180.9" y="766.9" width="18" height="2.2" fill="#000"/>
<rect x="2187" y="765.05" width="5.9" height="2.4" fill="#000"/>
<path d="M2184.3,769.05 V784.35 H2195.6 V769.05" fill="none" stroke="#000" stroke-width="2.4" stroke-linecap="butt" stroke-linejoin="miter"/>
<rect x="2186.8" y="772.55" width="1.9" height="8.9" fill="#000"/>
<rect x="2191.1" y="772.55" width="1.9" height="8.9" fill="#000"/>
<rect x="749.25" y="839.25" width="1481.75" height="88.25" rx="11.25" fill="#f7f7f7" stroke="#a9bac7" stroke-width="1.5"/>
<rect x="766.75" y="856.5" width="54" height="54" rx="12" fill="#fff"/>
<rect x="2041" y="860.25" width="46" height="46" rx="5.75" fill="none" stroke="#a9bac7" stroke-width="1.5"/>
<rect x="2104" y="860.25" width="46" height="46" rx="5.75" fill="none" stroke="#a9bac7" stroke-width="1.5"/>
<rect x="2167" y="860.25" width="46" height="46" rx="5.75" fill="none" stroke="#a9bac7" stroke-width="1.5"/>
<path d="M2060,876.35 L2070.6,883.05 L2060,889.95 Z" fill="none" stroke="#000" stroke-width="2.3" stroke-linecap="butt" stroke-linejoin="miter"/>
<path d="M2118.9,887.75 L2133.1,874.15 L2136.6,877.55 L2122.3,891.45 L2117.4,892.95 Z" fill="none" stroke="#000" stroke-width="2.1" stroke-linecap="butt" stroke-linejoin="miter"/>
<path d="M2130.2,876.85 L2133.9,880.35" fill="none" stroke="#000" stroke-width="1.9" stroke-linecap="butt" stroke-linejoin="miter"/>
<rect x="2180.9" y="874.9" width="18" height="2.2" fill="#000"/>
<rect x="2187" y="873.05" width="5.9" height="2.4" fill="#000"/>
<path d="M2184.3,877.05 V892.35 H2195.6 V877.05" fill="none" stroke="#000" stroke-width="2.4" stroke-linecap="butt" stroke-linejoin="miter"/>
<rect x="2186.8" y="880.55" width="1.9" height="8.9" fill="#000"/>
<rect x="2191.1" y="880.55" width="1.9" height="8.9" fill="#000"/>
<rect x="782.25" y="435.15" width="22.5" height="20.5" fill="none" stroke="#000" stroke-width="2.3"/><line x1="782.25" y1="440.5" x2="804.75" y2="440.5" stroke="#000" stroke-width="2.3" stroke-linecap="butt"/><path d="M786.43,444.49 L790.28,447.95 L786.43,451.44" fill="none" stroke="#000" stroke-width="2.42" stroke-linecap="round" stroke-linejoin="miter"/><line x1="792.51" y1="451.67" x2="800.69" y2="451.67" stroke="#000" stroke-width="2.42" stroke-linecap="butt"/>
<path d="M787,658.6 L789.6,670 C790,672 787.6,672.2 786.2,671 C784.2,669.2 781.6,670.4 782.3,672.2 C783,674 786.5,675.8 789.8,677.5 C794.5,680 799.5,679.5 801.8,675 C803.2,672 801.5,668.5 800.3,664" fill="none" stroke="#000" stroke-width="2.4" stroke-linecap="round" stroke-linejoin="round"/>
<path d="M792,663.9 L792.9,666.9 M795.8,663.6 L796.8,666.4" fill="none" stroke="#000" stroke-width="2.2" stroke-linecap="round" stroke-linejoin="miter"/>
<path d="M802.65,653.3 Q804.03,656.88 807.75,658.2 Q804.03,659.52 802.65,663.1 Q801.27,659.52 797.55,658.2 Q801.27,656.88 802.65,653.3 Z" fill="#000"/>
<path d="M793.5,764.33 C790.52,766.18 786.56,766.79 783.33,766.3 C781.1,773.43 782.84,781.55 793.5,786.52 C804.16,781.55 805.9,773.43 803.67,766.3 C800.44,766.79 796.48,766.18 793.5,764.33 Z" fill="none" stroke="#000" stroke-width="2.5" stroke-linecap="butt" stroke-linejoin="round"/>
<path d="M788,776.8 L791.6,780.5 L800.4,771.7" fill="none" stroke="#000" stroke-width="2.7" stroke-linecap="butt" stroke-linejoin="miter"/>
<path d="M781.8,875.5 H805 V879.46 A3.74,3.74 0 0 0 805,886.94 V890.9 H781.8 V886.94 A3.74,3.74 0 0 0 781.8,879.46 Z" fill="none" stroke="#000" stroke-width="2.4" stroke-linecap="butt" stroke-linejoin="miter"/><line x1="797.19" y1="875.72" x2="797.19" y2="879.46" stroke="#000" stroke-width="2.4" stroke-linecap="butt"/><line x1="797.19" y1="880.44" x2="797.19" y2="886.05" stroke="#000" stroke-width="2.4" stroke-linecap="butt"/><line x1="797.19" y1="887.03" x2="797.19" y2="890.68" stroke="#000" stroke-width="2.4" stroke-linecap="butt"/>
<rect x="1054.5" y="511.75" width="187.25" height="29.5" rx="5" fill="#f1edfe"/>
<rect x="1066" y="518.3" width="18.6" height="16.6" fill="none" stroke="#7e54f3" stroke-width="2"/><line x1="1066" y1="522.6" x2="1084.6" y2="522.6" stroke="#7e54f3" stroke-width="2" stroke-linecap="butt"/><path d="M1069.43,525.86 L1072.62,528.68 L1069.43,531.53" fill="none" stroke="#7e54f3" stroke-width="2.1" stroke-linecap="round" stroke-linejoin="miter"/><line x1="1074.48" y1="531.71" x2="1081.27" y2="531.71" stroke="#7e54f3" stroke-width="2.1" stroke-linecap="butt"/>
<rect x="1285.5" y="511.75" width="160.75" height="29.5" rx="5" fill="#f1edfe"/>
<rect x="1297.95" y="519.65" width="18" height="10.7" fill="none" stroke="#7e54f3" stroke-width="2.1"/><rect x="1306.01" y="531.4" width="1.89" height="3.21" fill="#7e54f3"/><rect x="1301.93" y="534.5" width="10.05" height="1.99" fill="#7e54f3"/>
</g>
<g class="cursor">
<path d="M369.3,724.7 L370.2,744.3 L374.8,740.4 L377.7,748.6 L381.1,747.2 L378,739.6 L383.1,739.6 Z" fill="#000" stroke="#fff" stroke-width="1.6" stroke-linecap="butt" stroke-linejoin="round" paint-order="stroke"/>
</g>
</svg>
<header class="topbar">
<span class="t" style="left:35.00px;top:23.50px;font-size:25.08px;letter-spacing:0.260px;color:#22282e;">Neuron, Inc.</span>
<span class="t" style="left:259.25px;top:23.50px;font-size:25.08px;letter-spacing:0.094px;color:#22282e;">All tenants</span>
<span class="t" style="left:1091.00px;top:22.75px;font-size:25.08px;letter-spacing:-0.102px;color:#6b757d;">Search</span>
<span class="t" style="left:2013.25px;top:25.75px;font-size:18.81px;letter-spacing:-0.184px;">MSP plan</span>
</header>
<nav class="sidebar">
<span class="t" style="left:26.00px;top:137.00px;font-size:15.3px;letter-spacing:-0.429px;font-weight:700;color:#fff;">Devices</span>
<span class="t" style="left:26.40px;top:242.00px;font-size:15.3px;letter-spacing:-0.539px;font-weight:700;color:#fff;">Support</span>
<span class="t" style="left:20.70px;top:347.00px;font-size:15.3px;letter-spacing:-0.430px;font-weight:700;color:#fff;">Helpdesk</span>
<span class="t" style="left:14.70px;top:452.00px;font-size:15.3px;letter-spacing:-0.447px;font-weight:700;color:#fff;">Knowledge</span>
<span class="t" style="left:13.00px;top:557.00px;font-size:15.3px;letter-spacing:-0.597px;font-weight:700;color:#fff;">Automations</span>
<span class="t" style="left:19.60px;top:662.00px;font-size:15.3px;letter-spacing:-0.523px;font-weight:700;color:#fff;">Reporting</span>
<span class="t" style="left:27.80px;top:1434.60px;font-size:15.3px;letter-spacing:-0.701px;font-weight:700;color:#fff;">Expand</span>
</nav>
<section class="titlebar">
<span class="t" style="left:209.25px;top:116.40px;font-size:41.53px;letter-spacing:-1.645px;font-weight:700;color:#000;">Ransomware Detected on Endpoint</span>
<span class="t" style="left:920.50px;top:132.00px;font-size:21.95px;letter-spacing:0.222px;">Sep 26, 8:29 AM</span>
</section>
<aside class="details">
<span class="t" style="left:142.50px;top:230.00px;font-size:30.74px;letter-spacing:-1.199px;font-weight:700;color:#000;">Details</span>
<span class="t" style="left:144.00px;top:302.00px;font-size:18.81px;letter-spacing:-0.472px;font-weight:700;">ID</span>
<span class="t" style="left:144.00px;top:355.75px;font-size:18.81px;letter-spacing:-0.265px;font-weight:700;">Priority</span>
<span class="t" style="left:145.00px;top:410.00px;font-size:18.81px;letter-spacing:-0.091px;font-weight:700;">Type</span>
<span class="t" style="left:145.00px;top:464.00px;font-size:18.81px;letter-spacing:-0.459px;font-weight:700;">Assigned to</span>
<span class="t" style="left:568.00px;top:299.80px;font-size:21.95px;letter-spacing:0.833px;">3456</span>
<span class="t" style="left:574.60px;top:353.25px;font-size:21.95px;letter-spacing:0.328px;color:#d42e3e;">High</span>
<span class="t" style="left:538.25px;top:407.50px;font-size:21.95px;letter-spacing:0.246px;">Security</span>
<span class="t" style="left:438.25px;top:462.00px;font-size:21.95px;letter-spacing:-0.036px;">Rachel Smith (me)</span>
<span class="t" style="left:145.00px;top:546.25px;font-size:18.81px;letter-spacing:-0.661px;font-weight:700;color:#6b7780;">Summary</span>
<span class="t" style="left:144.00px;top:589.50px;font-size:21.95px;letter-spacing:0.220px;">Malicious ransomware activities were detected on</span>
<span class="t" style="left:145.00px;top:631.50px;font-size:21.95px;letter-spacing:0.122px;">Windows endpoint</span>
<span class="t" style="left:377.75px;top:633.90px;font-size:17.97px;letter-spacing:0.907px;color:#7e54f3;">robk-win-rsa</span>
<span class="t" style="left:505.00px;top:631.50px;font-size:21.95px;letter-spacing:0.343px;">by Antivirus,</span>
<span class="t" style="left:145.00px;top:673.75px;font-size:21.95px;letter-spacing:0.221px;">along with unusual network traffic. It was also</span>
<span class="t" style="left:144.00px;top:715.75px;font-size:21.95px;letter-spacing:0.457px;">reported in</span>
<span class="t" style="left:305.30px;top:717.90px;font-size:17.97px;letter-spacing:1.255px;color:#7e54f3;">#45634</span>
<span class="t" style="left:392.25px;top:715.75px;font-size:21.95px;letter-spacing:-0.076px;">and</span>
<span class="t" style="left:481.00px;top:717.90px;font-size:17.97px;letter-spacing:1.315px;color:#7e54f3;">#45635</span>
<span class="t" style="left:567.00px;top:715.75px;font-size:21.95px;letter-spacing:0.009px;">by users</span>
<span class="t" style="left:145.00px;top:757.75px;font-size:21.95px;letter-spacing:0.213px;">from tenant</span>
<span class="t" style="left:311.75px;top:759.90px;font-size:17.97px;letter-spacing:0.579px;color:#7e54f3;">Zenith Industries</span>
<span class="t" style="left:471.50px;top:757.75px;font-size:21.95px;">.</span>
<span class="t" style="left:144.00px;top:841.25px;font-size:18.81px;letter-spacing:0.593px;color:#636d75;-webkit-text-stroke:0.35px #636d75;">Key activities</span>
<span class="t" style="left:227.75px;top:884.50px;font-size:21.95px;letter-spacing:-0.052px;font-weight:700;">Ransomware first detected</span>
<span class="t" style="left:227.75px;top:980.75px;font-size:21.95px;letter-spacing:0.050px;font-weight:700;">Unusual network traffic detected</span>
<span class="t" style="left:227.75px;top:1076.50px;font-size:21.95px;letter-spacing:-0.143px;font-weight:700;">New ticket on security incident</span>
<span class="t" style="left:227.75px;top:1214.50px;font-size:21.95px;letter-spacing:-0.282px;font-weight:700;">Rachel Smith ran a script successfully</span>
<span class="t" style="left:228.75px;top:920.00px;font-size:18.81px;letter-spacing:0.081px;color:#646d74;">Sep 26, 8:28 AM</span>
<span class="t" style="left:378.50px;top:920.00px;font-size:18.81px;font-weight:700;color:#646d74;">·</span>
<span class="t" style="left:415.25px;top:920.00px;font-size:18.81px;letter-spacing:0.414px;color:#646d74;">robk-win-rsa</span>
<span class="t" style="left:228.75px;top:1015.75px;font-size:18.81px;letter-spacing:0.081px;color:#646d74;">Sep 26, 8:32 AM</span>
<span class="t" style="left:378.50px;top:1015.75px;font-size:18.81px;font-weight:700;color:#646d74;">·</span>
<span class="t" style="left:415.25px;top:1015.75px;font-size:18.81px;letter-spacing:0.414px;color:#646d74;">robk-win-rsa</span>
<span class="t" style="left:228.75px;top:1111.75px;font-size:18.81px;letter-spacing:0.081px;color:#646d74;">Sep 26, 8:42 AM</span>
<span class="t" style="left:378.50px;top:1111.75px;font-size:18.81px;font-weight:700;color:#646d74;">·</span>
<span class="t" style="left:416.25px;top:1111.75px;font-size:18.81px;letter-spacing:0.796px;color:#646d74;">#45634</span>
<span class="t" style="left:228.75px;top:1249.50px;font-size:18.81px;letter-spacing:-0.022px;color:#646d74;">Sep 26, 9:07 AM</span>
<span class="t" style="left:377.20px;top:1249.50px;font-size:18.81px;font-weight:700;color:#646d74;">·</span>
<span class="t" style="left:413.30px;top:1249.50px;font-size:18.81px;letter-spacing:0.054px;color:#646d74;">Isolate Endpoint</span>
<span class="t" style="left:253.00px;top:1153.25px;font-size:18.81px;letter-spacing:0.655px;color:#7e54f3;-webkit-text-stroke:0.35px #7e54f3;">3 related activities</span>
</aside>
<main class="actions">
<span class="t" style="left:797.50px;top:230.75px;font-size:21.95px;letter-spacing:-0.749px;font-weight:700;">Actions</span>
<span class="t" style="left:953.25px;top:230.75px;font-size:21.95px;letter-spacing:0.218px;color:#5c656c;">Tickets</span>
<span class="t" style="left:1141.75px;top:230.75px;font-size:21.95px;letter-spacing:-0.134px;color:#5c656c;">Devices</span>
<span class="t" style="left:1335.00px;top:230.75px;font-size:21.95px;letter-spacing:-0.012px;color:#5c656c;">Comments</span>
<span class="t" style="left:1561.00px;top:230.75px;font-size:21.95px;letter-spacing:0.241px;color:#5c656c;">Activities</span>
<span class="t" style="left:1042.25px;top:233.30px;font-size:17.24px;color:#5c656c;-webkit-text-stroke:0.3px #5c656c;">2</span>
<span class="t" style="left:1237.00px;top:233.30px;font-size:17.24px;color:#5c656c;-webkit-text-stroke:0.3px #5c656c;">1</span>
<span class="t" style="left:1461.10px;top:233.30px;font-size:17.24px;color:#5c656c;-webkit-text-stroke:0.3px #5c656c;">3</span>
<span class="t" style="left:749.50px;top:332.25px;font-size:28.32px;letter-spacing:-0.596px;font-weight:700;color:#000;">Actions</span>
<span class="t" style="left:2000.00px;top:336.75px;font-size:21.42px;letter-spacing:-0.185px;font-weight:700;color:#fff;">Run all actions</span>
<span class="t" style="left:835.25px;top:420.00px;font-size:21.95px;letter-spacing:-0.025px;font-weight:700;">Isolate affected endpoint</span>
<span class="t" style="left:835.25px;top:642.00px;font-size:21.95px;letter-spacing:-0.303px;font-weight:700;">Disable compromised account</span>
<span class="t" style="left:835.25px;top:750.00px;font-size:21.95px;letter-spacing:-0.250px;font-weight:700;">Run full scan on target devices</span>
<span class="t" style="left:835.25px;top:858.00px;font-size:21.95px;letter-spacing:-0.244px;font-weight:700;">Review and send ticket reply</span>
<span class="t" style="left:835.25px;top:454.50px;font-size:18.39px;letter-spacing:0.241px;color:#646d74;">Remote execution</span>
<span class="t" style="left:836.25px;top:676.75px;font-size:18.39px;letter-spacing:0.182px;color:#646d74;">AI Technician</span>
<span class="t" style="left:835.25px;top:784.75px;font-size:18.39px;letter-spacing:0.524px;color:#646d74;">Endpoint protection</span>
<span class="t" style="left:835.25px;top:892.75px;font-size:18.39px;letter-spacing:0.276px;color:#646d74;">Helpdesk</span>
<span class="t" style="left:766.00px;top:515.75px;font-size:21.95px;letter-spacing:0.162px;">Run remote execution script</span>
<span class="t" style="left:1096.50px;top:518.00px;font-size:17.97px;letter-spacing:0.581px;color:#7e54f3;">Isolate endpoint</span>
<span class="t" style="left:1251.75px;top:515.75px;font-size:21.95px;letter-spacing:0.049px;">on</span>
<span class="t" style="left:1327.10px;top:518.00px;font-size:17.97px;letter-spacing:0.957px;color:#7e54f3;">robk-win-rsa</span>
<span class="t" style="left:1455.50px;top:515.75px;font-size:21.95px;letter-spacing:0.276px;">to disconnect endpoint from the network to prevent the ransomware</span>
<span class="t" style="left:767.00px;top:557.75px;font-size:21.95px;letter-spacing:0.302px;">from spreading to other endpoints.</span>
</main>
</body>
</html>
